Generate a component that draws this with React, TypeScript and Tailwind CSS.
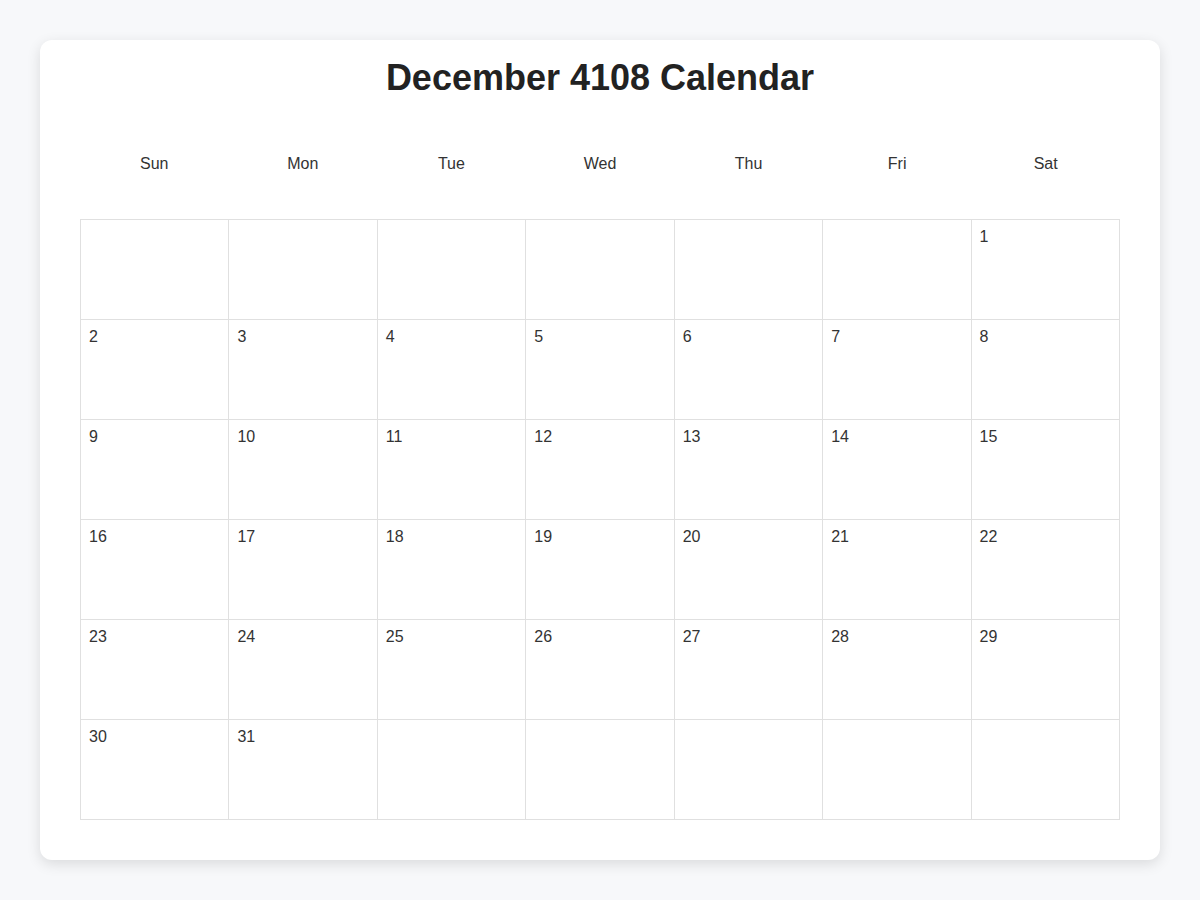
const dayNames = ['Sun', 'Mon', 'Tue', 'Wed', 'Thu', 'Fri', 'Sat']

// December 4108 starts on a Saturday
const cells: (number | null)[] = [
  ...Array(6).fill(null),
  ...Array.from({ length: 31 }, (_, i) => i + 1),
]
while (cells.length % 7 !== 0) cells.push(null)

export default function App() {
  return (
    <div className="min-h-[900px] bg-[#f7f8fa] p-10 font-['Liberation_Sans',Arial,sans-serif]">
      <div className="bg-white rounded-xl shadow-[0_4px_14px_rgba(0,0,0,0.12)] px-10 pt-4 pb-10">
        <h1 className="text-center text-[36px] leading-[43px] font-bold text-[#222]">
          December 4108 Calendar
        </h1>

        <div className="grid grid-cols-7 mt-[45px] h-10">
          {dayNames.map((d) => (
            <div key={d} className="flex items-center justify-center text-base text-[#333]">
              {d}
            </div>
          ))}
        </div>

        <div className="grid grid-cols-7 mt-[35px] border-l border-t border-[#e0e0e0]">
          {cells.map((n, i) => (
            <div key={i} className="h-[100px] border-r border-b border-[#e0e0e0] px-2 pt-[5px] text-base text-[#333]">
              {n}
            </div>
          ))}
        </div>
      </div>
    </div>
  )
}
